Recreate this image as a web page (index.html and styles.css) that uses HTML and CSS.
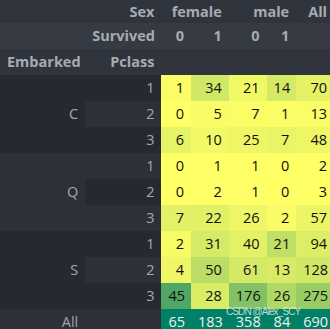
FILE: index.html
```html
<!DOCTYPE html>
<html>
<head>
<meta charset="utf-8">
<link rel="stylesheet" href="styles.css">
</head>
<body>
<div class="frame">
<table class="pivot">
  <colgroup>
    <col class="c-emb"><col class="c-pcl"><col class="c-n2"><col class="c-n3"><col class="c-n3"><col class="c-n2"><col class="c-n3">
  </colgroup>
  <thead>
    <tr class="h1">
      <th class="blank"></th>
      <th class="lvl">Sex</th>
      <th class="col" colspan="2">female</th>
      <th class="col" colspan="2">male</th>
      <th class="col">All</th>
    </tr>
    <tr class="h2">
      <th class="blank"></th>
      <th class="lvl">Survived</th>
      <th class="col">0</th>
      <th class="col">1</th>
      <th class="col">0</th>
      <th class="col">1</th>
      <th class="blank"></th>
    </tr>
    <tr class="h3">
      <th class="lvl">Embarked</th>
      <th class="lvl">Pclass</th>
      <th class="blank"></th><th class="blank"></th><th class="blank"></th><th class="blank"></th><th class="blank"></th>
    </tr>
  </thead>
  <tbody>
    <tr class="odd">
      <th class="idx" rowspan="3">C</th>
      <th class="idx">1</th>
      <td style="background:#fbfd66">1</td><td style="background:#d1e866">34</td><td style="background:#f1f866">21</td><td style="background:#d4ea66">14</td><td style="background:#e6f266">70</td>
    </tr>
    <tr class="even">
      <th class="idx">2</th>
      <td style="background:#ffff66">0</td><td style="background:#f9fc66">5</td><td style="background:#fbfd66">7</td><td style="background:#fcfe66">1</td><td style="background:#fbfd66">13</td>
    </tr>
    <tr class="odd">
      <th class="idx">3</th>
      <td style="background:#e7f366">6</td><td style="background:#f2f966">10</td><td style="background:#eef666">25</td><td style="background:#eaf466">7</td><td style="background:#eef666">48</td>
    </tr>
    <tr class="even">
      <th class="idx" rowspan="3">Q</th>
      <th class="idx">1</th>
      <td style="background:#ffff66">0</td><td style="background:#ffff66">1</td><td style="background:#ffff66">1</td><td style="background:#ffff66">0</td><td style="background:#ffff66">2</td>
    </tr>
    <tr class="odd">
      <th class="idx">2</th>
      <td style="background:#ffff66">0</td><td style="background:#fefe66">2</td><td style="background:#ffff66">1</td><td style="background:#ffff66">0</td><td style="background:#ffff66">3</td>
    </tr>
    <tr class="even">
      <th class="idx">3</th>
      <td style="background:#e4f166">7</td><td style="background:#e2f066">22</td><td style="background:#edf666">26</td><td style="background:#f9fc66">2</td><td style="background:#ebf566">57</td>
    </tr>
    <tr class="odd">
      <th class="idx" rowspan="3">S</th>
      <th class="idx">1</th>
      <td style="background:#f7fb66">2</td><td style="background:#d5ea66">31</td><td style="background:#e3f166">40</td><td style="background:#bfdf66">21</td><td style="background:#ddee66">94</td>
    </tr>
    <tr class="even">
      <th class="idx">2</th>
      <td style="background:#eff766">4</td><td style="background:#badd66">50</td><td style="background:#d4ea66">61</td><td style="background:#d7eb66">13</td><td style="background:#d0e866">128</td>
    </tr>
    <tr class="odd">
      <th class="idx">3</th>
      <td style="background:#4ea766">45</td><td style="background:#d9ec66">28</td><td style="background:#82c166">176</td><td style="background:#b0d866">26</td><td style="background:#9acc66">275</td>
    </tr>
    <tr class="even total">
      <th class="idx">All</th>
      <th class="idx"></th>
      <td style="background:#008066">65</td><td style="background:#008066">183</td><td style="background:#008066">358</td><td style="background:#008066">84</td><td style="background:#008066">690</td>
    </tr>
  </tbody>
</table>
<div class="watermark">CSDN @Alex_SCY</div>
</div>
</body>
</html>
```
FILE: styles.css
```css
html, body {
  margin: 0;
  padding: 0;
  overflow: hidden;
  background: #262930;
}

.frame {
  position: relative;
}

.pivot {
  border-collapse: collapse;
  border-spacing: 0;
  table-layout: fixed;
  width: 334px;
  font-family: "Open Sans", "Noto Sans", sans-serif;
  font-size: 14.5px;
}

.c-emb { width: 85px; }
.c-pcl { width: 76px; }
.c-n2 { width: 29.5px; }
.c-n3 { width: 37.7px; }

.pivot th,
.pivot td {
  padding: 0 7px;
  text-align: right;
  white-space: nowrap;
  line-height: 20px;
  height: 26px;
  box-sizing: border-box;
  vertical-align: middle;
}

.pivot thead th {
  font-weight: 700;
  color: #a7abb3;
}

.h1 th { height: 23px; background: #30343c; }
.h2 th { background: #363a42; }
.h3 th { background: #30343c; }

.pivot tbody tr.odd th { background: #262930; }
.pivot tbody tr.even th { background: #2d3038; }

.pivot tbody th.idx {
  font-weight: 400;
  color: #a3a7ae;
}

.pivot td {
  color: #111111;
}

.pivot tr.total td {
  color: #f1f1f1;
}

.watermark {
  position: absolute;
  left: 226px;
  top: 306px;
  font-family: "Liberation Sans", Arial, sans-serif;
  font-size: 10px;
  letter-spacing: -0.9px;
  line-height: 12px;
  color: rgba(235, 240, 240, 0.8);
  white-space: nowrap;
}
```
